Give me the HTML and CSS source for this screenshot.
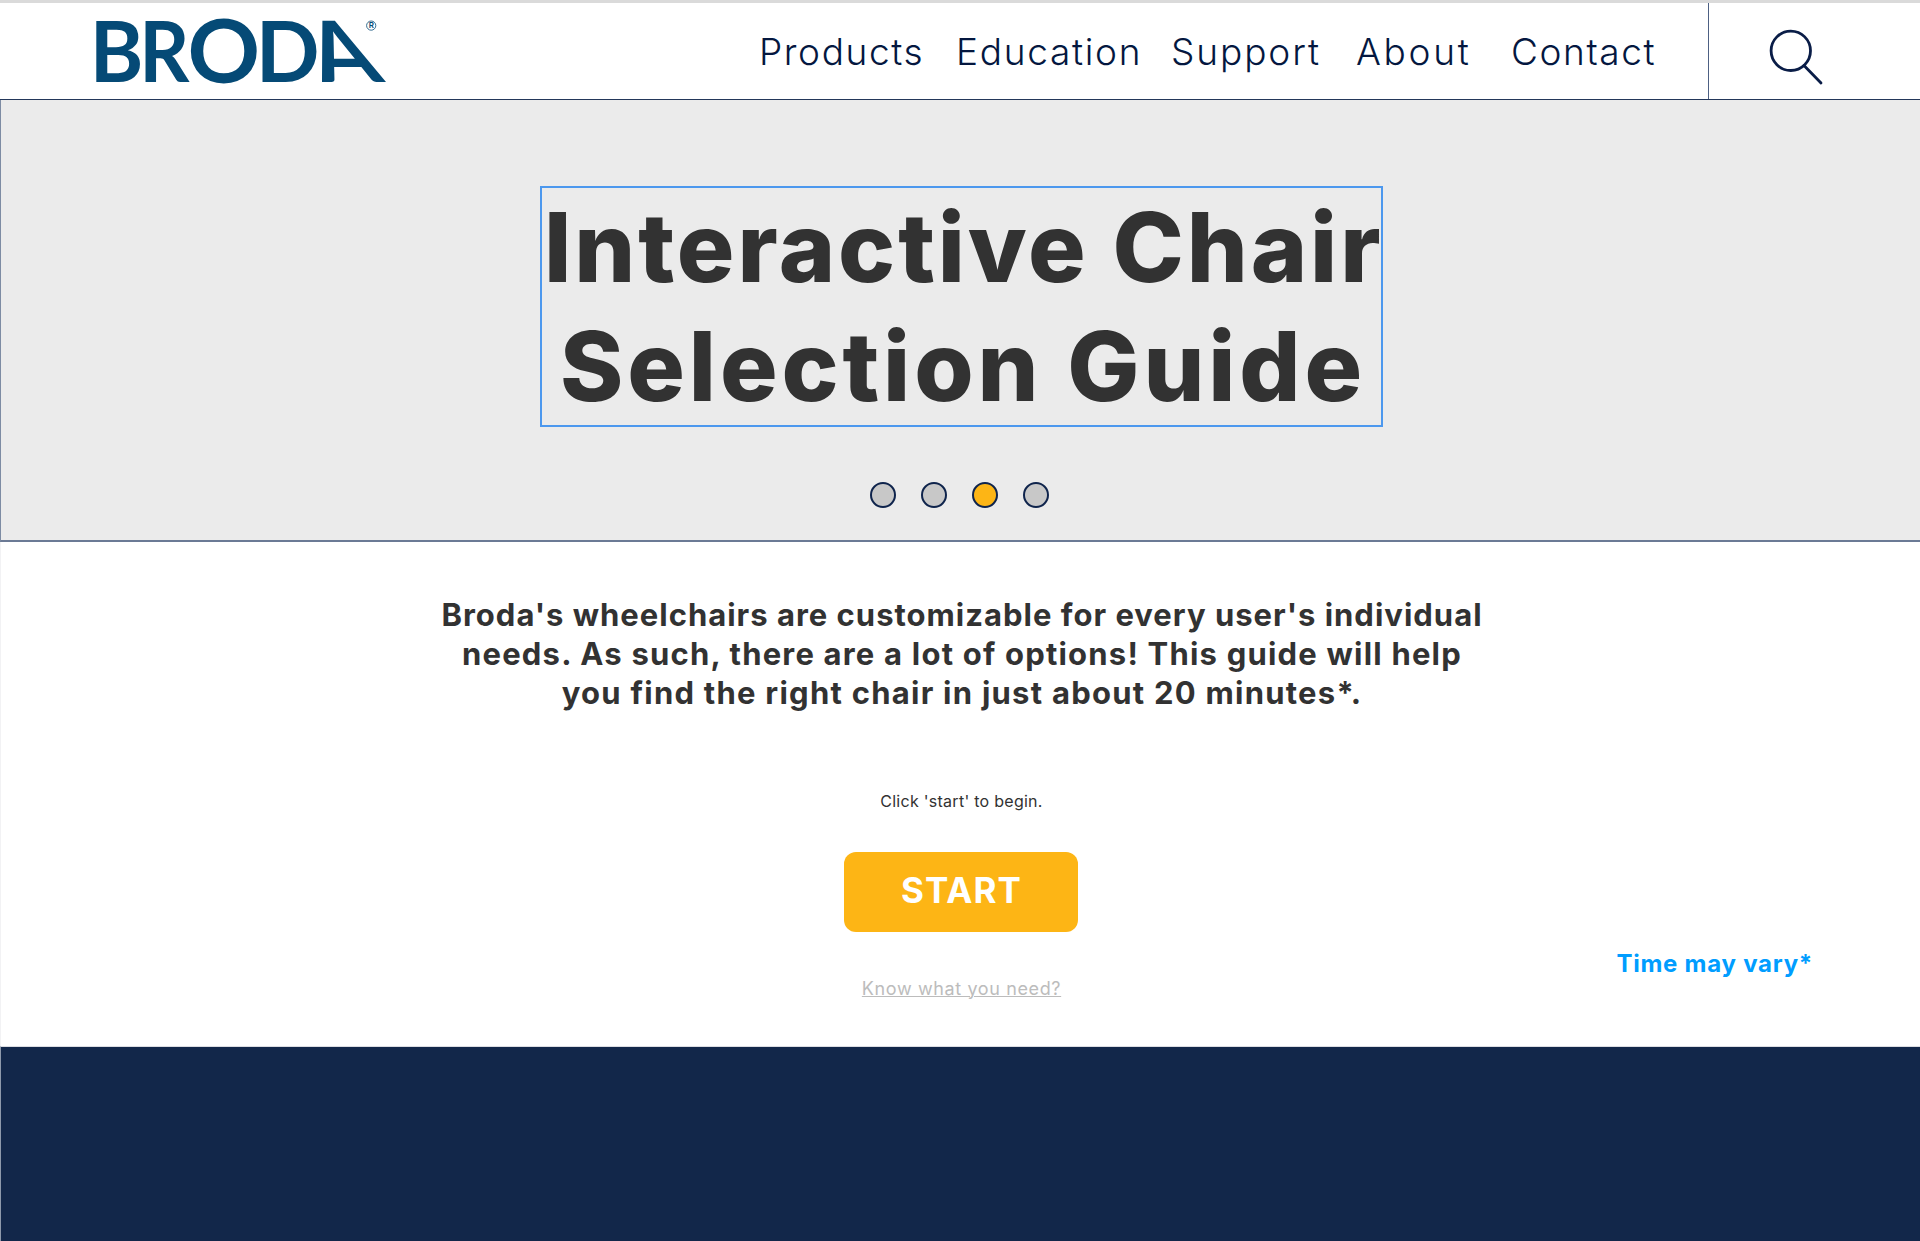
FILE: index.html
```
<!DOCTYPE html>
<html lang="en">
<head>
    <meta charset="UTF-8">
    <meta name="viewport" content="width=device-width, initial-scale=1.0">
    <title>Broda - Interactive Chair Selection Guide</title>
    <link rel="stylesheet" href="styles.css">
</head>
<body>
    <header class="header">
        <a class="logo">
            <svg width="300" height="96" viewBox="90 3 300 96">
                <g class="logo-text">
                    <text transform="translate(89.8 82) scale(0.97 1.01)">B</text>
                    <text transform="translate(139.3 82) scale(0.93 1.01)">R</text>
                    <text transform="translate(187.6 82.6) scale(1.07 1.04)">O</text>
                    <text transform="translate(255.8 82) scale(1 1.01)">D</text>
                    <text transform="translate(322.5 82) skewX(22.5) scale(1.08 1.01)">A</text>
                </g>
                <circle class="reg-ring" cx="371.2" cy="25.6" r="4.6"/>
                <text class="reg-letter" x="371.3" y="28.4">R</text>
            </svg>
        </a>
        <nav class="nav">
            <a class="products">Products</a>
            <a class="education">Education</a>
            <a class="support">Support</a>
            <a class="about">About</a>
            <a class="contact">Contact</a>
        </nav>
        <button class="search" aria-label="Search">
            <svg width="60" height="60" viewBox="0 0 60 60">
                <circle cx="27.8" cy="27.8" r="19.7"/>
                <path d="M41 42.5 L58 60"/>
            </svg>
        </button>
    </header>

    <section class="hero">
        <h1>
            <span class="title-top">Interactive Chair</span>
            <span class="title-bottom">Selection Guide</span>
        </h1>
        <div class="dots">
            <span class="dot"></span>
            <span class="dot"></span>
            <span class="dot active"></span>
            <span class="dot"></span>
        </div>
    </section>

    <main class="intro">
        <p class="lead">
            <span class="lead-1">Broda's wheelchairs are customizable for every user's individual</span>
            <span class="lead-2">needs. As such, there are a lot of options! This guide will help</span>
            <span class="lead-3">you find the right chair in just about 20 minutes*.</span>
        </p>
        <p class="hint">Click 'start' to begin.</p>
        <button class="start-button">START</button>
        <p class="note">Time may vary*</p>
        <a class="skip-link">Know what you need?</a>
    </main>

    <footer class="footer"></footer>
</body>
</html>
```
FILE: styles.css
```
* {
    box-sizing: border-box;
}

body {
    font-family: Inter, sans-serif;
    margin: 0;
    min-height: 1241px;
    display: flex;
    flex-direction: column;
    background: #fff;
    color: #323232;
}

h1, p {
    margin: 0;
}

/* header */
.header {
    height: 100px;
    display: flex;
    border-top: 3px solid #dadada;
    border-bottom: 1px solid #23375a;
}

.logo {
    width: 758px;
    padding-left: 90px;
}

.logo svg {
    display: block;
    overflow: visible;
}

.logo-text {
    font-family: Lato, sans-serif;
    font-size: 84px;
    font-weight: 700;
    fill: #054a76;
}

.reg-ring {
    fill: none;
    stroke: #054a76;
    stroke-width: 0.8;
}

.reg-letter {
    font-size: 8px;
    font-weight: 600;
    text-anchor: middle;
    fill: #054a76;
}

.nav {
    width: 950px;
    padding-top: 1px;
    display: grid;
    grid-template-columns: 197px 216px 185px 155px 197px;
    align-items: center;
    font-size: 37px;
    font-weight: 300;
    color: #04173f;
}

.products {
    padding-left: 1px;
    letter-spacing: 1.6px;
}

.education {
    padding-left: 1px;
    letter-spacing: 1.7px;
}

.support {
    letter-spacing: 1.9px;
}

.about {
    letter-spacing: 2.7px;
}

.contact {
    letter-spacing: 1.6px;
}

.search {
    flex: 1;
    padding: 23px 0 0 54px;
    border: none;
    border-left: 1px solid #4d6083;
    background: none;
    text-align: left;
}

.search svg {
    display: block;
    height: 60px;
    margin-top: -20px;
    overflow: visible;
    fill: none;
    stroke: #0a1d47;
    stroke-width: 2.8;
    stroke-linecap: round;
}

/* hero */
.hero {
    height: 442px;
    padding: 86px 0 0 2px;
    display: flex;
    flex-direction: column;
    align-items: center;
    background: #ebebeb;
    border-left: 1px solid #7d8ba3;
    border-bottom: 2px solid #6b7a95;
}

.hero h1 {
    width: 843px;
    height: 241px;
    border: 2px solid #4c98ee;
    font-size: 96px;
    font-weight: 800;
    line-height: 119px;
    text-align: center;
    white-space: nowrap;
}

.hero h1 span {
    display: block;
}

.title-top {
    padding-left: 2px;
    letter-spacing: 2.9px;
}

.title-bottom {
    padding-left: 3px;
    letter-spacing: 3.9px;
}

.dots {
    display: flex;
    gap: 25px;
    margin-top: 55px;
    margin-right: 5px;
}

.dot {
    width: 26px;
    height: 26px;
    border: 2px solid #0f244c;
    border-radius: 50%;
    background: #c8c8c8;
}

.dot.active {
    background: #fdb515;
}

/* intro */
.intro {
    height: 504px;
    padding-top: 53px;
    display: flex;
    flex-direction: column;
    align-items: center;
    border-left: 1px solid #f2f2f4;
}

.lead {
    padding-left: 3px;
    font-size: 31px;
    font-weight: 700;
    line-height: 39px;
    text-align: center;
    white-space: nowrap;
}

.lead span {
    display: block;
}

.lead-1 {
    letter-spacing: 1px;
}

.lead-2 {
    letter-spacing: 1.2px;
}

.lead-3 {
    letter-spacing: 1.25px;
}

.hint {
    margin-top: 79px;
    padding-left: 2px;
    font-size: 16px;
    line-height: 20px;
    letter-spacing: 0.27px;
}

.start-button {
    width: 234px;
    height: 80px;
    margin-top: 41px;
    padding: 0 0 4px 2px;
    border: none;
    border-radius: 12px;
    background: #fdb515;
    color: #fff;
    font-family: inherit;
    font-size: 35px;
    font-weight: 700;
    letter-spacing: 1.05px;
}

.note {
    align-self: flex-end;
    margin: 17px 0 -1px;
    padding-right: 107px;
    font-size: 24px;
    font-weight: 700;
    line-height: 30px;
    letter-spacing: 0.75px;
    color: #009dff;
}

.skip-link {
    padding-left: 2px;
    font-size: 18px;
    line-height: 22px;
    letter-spacing: 0.62px;
    color: #bcbcbc;
    text-decoration: underline;
    text-decoration-thickness: 1px;
    text-underline-offset: 1px;
}

/* footer */
.footer {
    flex: 1;
    border-top: 1px solid #dcdde2;
    border-left: 1px solid #8e99ab;
    background: #12274a;
}
```
